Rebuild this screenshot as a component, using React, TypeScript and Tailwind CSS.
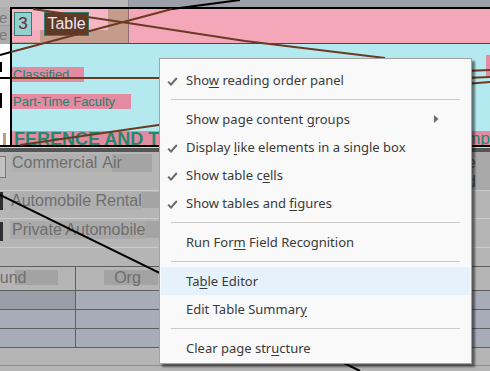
import type { ReactNode } from "react";

const Check = () => (
  <svg width="11" height="9" viewBox="0 0 11 9" className="absolute left-[6px] top-[11px]">
    <path d="M1.2 4.6 L4 7.6 L9.8 1" fill="none" stroke="#6a6a6a" strokeWidth="2" />
  </svg>
);

const Arrow = () => (
  <svg width="5" height="8" viewBox="0 0 5 8" className="absolute right-[31px] top-[10px]">
    <polygon points="0,0 4.5,4 0,8" fill="#6d6d6d" />
  </svg>
);

function Item({
  children,
  checked,
  sub,
  active,
}: {
  children: ReactNode;
  checked?: boolean;
  sub?: boolean;
  active?: boolean;
}) {
  return (
    <div
      className={`relative mx-[1px] flex h-[28px] items-center pl-[25px] pt-px ${
        active ? "bg-[#e5f1fb]" : ""
      }`}
    >
      {checked && <Check />}
      <span className="whitespace-nowrap">{children}</span>
      {sub && <Arrow />}
    </div>
  );
}

const Sep = () => <div className="mx-[11px] my-[5px] h-px bg-[#cbcbcb]" />;

const U = ({ children }: { children: ReactNode }) => (
  <span className="underline underline-offset-2">{children}</span>
);

export default function App() {
  return (
    <div className="relative h-[371px] w-[490px] overflow-hidden bg-[#b5b5b5] font-['Liberation_Sans',Arial,sans-serif]">
      {/* top strip */}
      <div className="flex h-[7px]">
        <div className="w-[128px] bg-[#b7b7b7]" />
        <div className="w-px bg-[#8a8a8a]" />
        <div className="flex-1 bg-[#9ca0a8]" />
      </div>
      <div className="flex h-[2px]">
        <div className="w-[10px] bg-[#b0b0b0]" />
        <div className="flex-1 bg-black" />
      </div>

      {/* pink row with tags */}
      <div className="flex h-[34px]">
        <div className="flex w-[10px] flex-col overflow-hidden bg-[#afafaf] text-[15px] leading-[16px] text-[#7a7a7a]">
          <div className="-ml-[1px] h-[17px] border-b border-[#9a9a9a] pt-[1px]">e</div>
          <div className="-ml-[1px] flex-1 bg-[#aaaaaa] pt-[1px]">e</div>
        </div>
        <div className="w-[2px] bg-black" />
        <div className="relative w-[116px] bg-[#c59b8c]">
          <div className="h-[21px] w-[96px] bg-[#f7b6c6]" />
          <div className="h-[12px] w-[28px] bg-[#f3adbf]" />
          <div className="absolute left-[2px] top-[3px] flex items-start gap-[12px]">
            <div className="flex h-[24px] w-[18px] items-center justify-center border border-[#2e7d70] bg-[#93d1cf] text-[17px] text-[#6b2237]">
              3
            </div>
            <div className="flex h-[24px] w-[45px] items-center justify-center border border-[#2e7d70] bg-[#5e3a24] text-[16px] text-[#ece4f4]">
              Table
            </div>
          </div>
        </div>
        <div className="w-px bg-[#8f6f73]" />
        <div className="flex-1 bg-[#f4a7b8]" />
      </div>
      <div className="flex h-px">
        <div className="w-[10px] bg-[#aaaaaa]" />
        <div className="w-[2px] bg-black" />
        <div className="flex-1 bg-[#7d2f3a]" />
      </div>

      {/* cyan block */}
      <div className="flex h-[87px]">
        <div className="w-[10px] bg-white" />
        <div className="w-[2px] bg-black" />
        <div className="flex flex-1 bg-[#b4eaef]">
          <div className="flex flex-col items-start gap-[12px] pt-[23px] text-[13px] leading-[15px] text-[#24826f]">
            <span className="bg-[#e38ba2] pl-px pr-[15px]">Classified</span>
            <span className="bg-[#e38ba2] pl-px pr-[16px]">Part-Time Faculty</span>
          </div>
          <div className="ml-auto mt-[11px] h-[22px] w-[4px] bg-[#e38ba2]" />
        </div>
      </div>

      {/* heading band */}
      <div className="flex h-[14px]">
        <div className="flex w-[10px] bg-white">
          <div className="ml-[3px] mt-[2px] w-[3px] bg-[#c0a070]" />
        </div>
        <div className="w-[2px] bg-black" />
        <div className="flex flex-1 items-start justify-between overflow-hidden bg-[#e38ba2] text-[18px] leading-[16px] text-[#23886c]">
          <span className="whitespace-nowrap pl-[2px] font-bold">FERENCE AND TRAVEL</span>
          <span className="whitespace-nowrap text-[17px]">Comp</span>
        </div>
      </div>
      <div className="h-[2px] bg-black" />
      <div className="h-px bg-[#d9d9d9]" />
      <div className="h-[4px] bg-[#555555]" />

      {/* expense rows */}
      <div className="flex h-[39px] border-b border-[#cacaca] text-[16px] leading-[18px] text-[#6e6e6e]">
        <div className="w-[10px]">
          <div className="mt-[4px] h-[22px] w-[6px] border border-l-0 border-[#7a7a7a] bg-[#c2c2c2]" />
        </div>
        <div className="mt-[2px] flex h-[18px] items-start pl-[2px]">
          <span className="bg-[#b0b0b0] pr-[1px]">Commercial</span>
          <span className="bg-[linear-gradient(to_right,#b0b0b0_14px,#a4a4a4_14px)] pr-[30px] pl-[4px]">Air</span>
        </div>
        <div className="ml-auto flex w-[18px] flex-col overflow-hidden bg-[#a9a9a9] pt-px leading-[19px] text-[#555555]">
          <span className="-ml-[5px]">e</span>
          <span className="-ml-[5px]">d</span>
        </div>
      </div>
      <div className="flex h-[28px] border-b border-[#cacaca] text-[16px] leading-[18px] text-[#6e6e6e]">
        <div className="w-[10px]">
          <div className="mt-px h-[18px] w-[3px] bg-[#2e2e2e]" />
        </div>
        <div className="mt-px flex h-[18px] items-start">
          <span className="bg-[#afafaf] pl-px">Automobile Rental</span>
          <span className="h-[16px] w-[40px] bg-[#a4a4a4]" />
        </div>
      </div>
      <div className="flex h-[29px] border-b border-[#cacaca] text-[16px] leading-[18px] text-[#6e6e6e]">
        <div className="w-[10px]">
          <div className="mt-[3px] h-[19px] w-[3px] bg-[#2e2e2e]" />
        </div>
        <div className="mt-[2px] flex h-[18px] items-start">
          <span className="bg-[#a9a9a9] pl-[2px]">Private Automobile</span>
          <span className="h-[17px] w-[40px] bg-[#a4a4a4]" />
        </div>
      </div>
      <div className="h-[18px]" />

      {/* table */}
      <div className="h-px bg-[#5f5f5f]" />
      <div className="flex h-[23px] text-[16px] leading-[18px] text-[#6e6e6e]">
        <div className="relative w-[76px] overflow-hidden border-r border-[#5f5f5f]">
          <div className="absolute left-[15px] top-[3px] h-[15px] w-[43px] bg-[#a3a3a3]" />
          <span className="relative -ml-[10px] mt-[2px] block">Fund</span>
        </div>
        <div className="relative flex w-[104px] justify-center border-r border-[#5f5f5f]">
          <div className="absolute left-[28px] top-[3px] h-[15px] w-[54px] bg-[#a3a3a3]" />
          <span className="relative mt-[2px]">Org</span>
        </div>
        <div className="flex-1" />
      </div>
      <div className="flex h-[19px] border-t border-[#5f5f5f]">
        <div className="w-[76px] border-r border-[#5f5f5f] bg-[#9b9ea6]" />
        <div className="flex-1 bg-[#a8abb8]" />
      </div>
      <div className="flex h-[19px] border-t border-[#5f5f5f]">
        <div className="w-[76px] border-r border-[#5f5f5f] bg-[#a8abb8]" />
        <div className="flex-1 bg-[#a8abb8]" />
      </div>
      <div className="flex h-[20px] border-y border-[#5f5f5f]">
        <div className="w-[76px] border-r border-[#5f5f5f] bg-[#a8abb8]" />
        <div className="flex-1 bg-[#a8abb8]" />
      </div>
      <div className="h-[17px]" />
      <div className="h-px bg-[#8d8d8d]" />

      {/* structure lines drawn over the page */}
      <svg
        width="490"
        height="371"
        viewBox="0 0 490 371"
        className="pointer-events-none absolute left-0 top-0"
      >
        <g fill="none" strokeWidth="2">
          <path d="M0 55 L11 52" stroke="#000" />
          <path d="M172 9 L240 0" stroke="#000" />
          <path d="M0 78 L12 78" stroke="#000" />
          <path d="M1 62 L1 72 M1 93 L1 108" stroke="#000" />
          <path d="M0 195 L360 371" stroke="#000" />
          <path d="M11 52 L172 9" stroke="#6b3a22" />
          <path d="M33 9 L128 23 L245 41 L385 58" stroke="#6b3a22" />
          <path d="M12 78 L200 78" stroke="#6b3a22" />
          <path d="M20 145 L200 119" stroke="#6b3a22" />
          <path d="M465 71 L490 70 M465 78 L490 77 M465 84 L490 82" stroke="#6b3a22" />
        </g>
      </svg>

      {/* context menu */}
      <div className="absolute left-[159px] top-[58px] w-[313px] border border-[#a3a3a3] bg-[#f9f9f9] pb-px pt-[7px] font-['Noto_Sans',sans-serif] text-[13px] text-[#3a3a3a] shadow-[3px_3px_2px_rgba(0,0,0,0.5)]">
        <Item checked>
          Sho<U>w</U> reading order panel
        </Item>
        <Sep />
        <Item sub>
          Show page content <U>g</U>roups
        </Item>
        <Item checked>
          Display <U>l</U>ike elements in a single box
        </Item>
        <Item checked>
          Show table c<U>e</U>lls
        </Item>
        <Item checked>
          Show tables and <U>f</U>igures
        </Item>
        <Sep />
        <Item>
          Run For<U>m</U> Field Recognition
        </Item>
        <Sep />
        <Item active>
          Ta<U>b</U>le Editor
        </Item>
        <Item>
          Edit Table Summar<U>y</U>
        </Item>
        <Sep />
        <Item>
          Clear page str<U>u</U>cture
        </Item>
      </div>
    </div>
  );
}
